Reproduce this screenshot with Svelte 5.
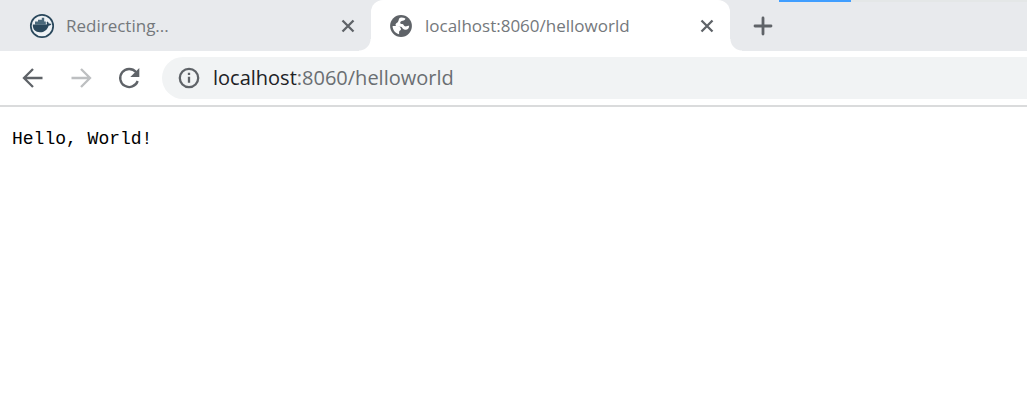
<script>
  let address = $state('localhost:8060/helloworld');
  const split = $derived(address.indexOf(':') < 0 ? address.length : address.indexOf(':'));
</script>

<div class="browser">
  <header>
    <div class="strip">
      <div class="tab">
        <svg class="favicon" viewBox="0 0 26 26" aria-hidden="true">
          <circle cx="13" cy="13" r="11.2" fill="#eef2f5" stroke="#2a485c" stroke-width="1.7" />
          <path fill="#2a485c" d="M3.8 11.6h13.9c.4-.8.2-1.7-.1-2.3l.8-.9c.9.6 1.4 1.4 1.5 2.3.9-.2 1.8 0 2.5.4-.5 1.1-1.5 1.5-2.8 1.6-1.4 4.2-4.2 6.6-8.6 6.6-4.6 0-7.4-2.6-7.2-7.7z" />
          <path fill="#49687a" d="M6 8.6h3v3.2H6zM9 6.8h3v5H9zM12 6.8h.8v-2h2.4v3.8h1.6v3.2H12z" />
        </svg>
        <span>Redirecting...</span>
        <button aria-label="Close Redirecting tab">
          <svg viewBox="0 0 14 14"><path d="M1.5 1.5l11 11m0-11l-11 11" /></svg>
        </button>
      </div>
      <div class="tab active">
        <svg class="favicon" viewBox="0 0 26 26" aria-hidden="true">
          <circle cx="13" cy="13" r="10.9" fill="#5f6368" />
          <path fill="#fff" d="M13.2 4.6c1.6 0 2.9.3 4.2 1-.2 1.5-1.2 2-2.7 2.2-1.5.2-2.5.9-2.5 1.9 0 1.1 1 1.3 2.1 1.3 1.3 0 1.4 1.9 2.6 2.3 1.4.4 2.6-.5 4.3-.5-.1 2.8-1.5 4-3.4 4-1.3 0-1.9-.4-2.8-1-.8-.5-1.1-2-2.2-2H9.9c-1.5 0-2.4-.9-2.4-2.2 0-1.2 1.4-1.5 2.2-2.4.7-.8.8-1.7 1.1-2.7.3-1 1.1-1.9 2.4-1.9z" />
          <path fill="#fff" d="M4.6 13.1h4.5c2.1 0 3.9 1.4 3.9 3.2 0 1.4-1.9 1.2-1.9 2.5v2.4c-3.9-.8-6.5-4.1-6.5-8.1z" />
        </svg>
        <span>localhost:8060/helloworld</span>
        <button aria-label="Close localhost tab">
          <svg viewBox="0 0 14 14"><path d="M1.5 1.5l11 11m0-11l-11 11" /></svg>
        </button>
      </div>
      <button class="new" aria-label="New tab">
        <svg viewBox="0 0 20 20"><path d="M10 2v16M2 10h16" /></svg>
      </button>
      <div class="edge"></div>
    </div>
    <nav>
      <button aria-label="Back">
        <svg viewBox="0 0 24 24"><path d="M21.5 12H3M12 3l-9 9 9 9" /></svg>
      </button>
      <button aria-label="Forward" disabled>
        <svg viewBox="0 0 24 24"><path d="M2.5 12H21M12 3l9 9-9 9" /></svg>
      </button>
      <button aria-label="Reload">
        <svg viewBox="0 0 24 24"><path d="M19 6.1A9 9 0 1 0 20.7 15" /><path class="solid" d="M22.3 2v9h-9z" /></svg>
      </button>
      <div class="omnibox">
        <svg class="info" viewBox="0 0 24 24" aria-hidden="true"><circle cx="12" cy="12" r="9.2" /><path d="M12 10.8v6M12 6.8v2.2" /></svg>
        <div class="address">
          <div class="shown" aria-hidden="true">{address.slice(0, split)}<span>{address.slice(split)}</span></div>
          <input aria-label="Address" type="text" spellcheck="false" bind:value={address} />
        </div>
      </div>
    </nav>
  </header>
  <main><pre>Hello, World!</pre></main>
</div>

<style>
  :global(body) {
    margin: 0;
    background: #fff;
  }
  .browser {
    font-family: 'Open Sans', 'Noto Sans', sans-serif;
    color: #5f6368;
  }
  button {
    display: flex;
    align-items: center;
    justify-content: center;
    flex: none;
    padding: 0;
    border: 0;
    background: none;
    color: inherit;
  }
  svg {
    flex: none;
    fill: none;
    stroke: currentColor;
    stroke-width: 2.3;
  }
  .strip {
    position: relative;
    display: flex;
    height: 51px;
    padding-left: 12px;
    background: #e8eaed;
  }
  .tab {
    position: relative;
    display: flex;
    flex: 0 1 359px;
    box-sizing: border-box;
    min-width: 0;
    align-items: center;
    gap: 11px;
    padding: 0 13px 0 17px;
    font-size: 17px;
    line-height: 24px;
    color: #74787c;
  }
  .tab span {
    flex: 1;
    min-width: 0;
    overflow: hidden;
    white-space: nowrap;
  }
  .tab button {
    width: 20px;
    height: 20px;
    color: #5f6368;
  }
  .tab button svg {
    width: 14px;
    height: 14px;
  }
  .active {
    border-radius: 12px 12px 0 0;
    background: #fff;
  }
  .active::before,
  .active::after {
    position: absolute;
    bottom: 0;
    width: 12px;
    height: 12px;
    content: '';
  }
  .active::before {
    right: 100%;
    background: radial-gradient(circle at 0 0, transparent 11px, #fff 12px);
  }
  .active::after {
    left: 100%;
    background: radial-gradient(circle at 100% 0, transparent 11px, #fff 12px);
  }
  .favicon {
    width: 26px;
    height: 26px;
    stroke: none;
  }
  .new {
    width: 42px;
    margin-left: 12px;
  }
  .new svg {
    width: 20px;
    height: 20px;
    stroke-width: 2.8;
    stroke-linecap: round;
  }
  .edge {
    position: absolute;
    top: 0;
    right: 0;
    left: 779px;
    height: 2px;
    background: linear-gradient(90deg, #409eff 72px, #e4e7e7 72px);
  }
  nav {
    display: flex;
    align-items: center;
    gap: 24px;
    padding: 6px 0 6px 21px;
    border-bottom: 2px solid #dadbdc;
  }
  nav button {
    width: 24px;
    height: 24px;
  }
  nav button:disabled {
    color: #bdbfc1;
  }
  nav button svg {
    width: 24px;
    height: 24px;
  }
  .solid {
    fill: currentColor;
    stroke: none;
  }
  .omnibox {
    display: flex;
    flex: 1;
    min-width: 0;
    height: 42px;
    align-items: center;
    gap: 12px;
    margin-left: -3px;
    padding-left: 15px;
    border-radius: 21px 0 0 21px;
    background: #f1f3f4;
    font-size: 20px;
    line-height: 28px;
  }
  .info {
    width: 24px;
    height: 24px;
  }
  .address {
    display: grid;
    flex: 1;
    min-width: 0;
  }
  .shown,
  .address input {
    grid-area: 1 / 1;
    min-width: 0;
    height: 28px;
    white-space: pre;
  }
  .shown {
    overflow: hidden;
    color: #202124;
  }
  .shown span {
    color: #6a6e72;
  }
  .address input {
    padding: 0;
    border: 0;
    outline: 0;
    background: transparent;
    color: transparent;
    caret-color: #202124;
    font: inherit;
  }
  main {
    padding: 20px 12px;
  }
  pre {
    margin: 0;
    color: #000;
    font: 18px/24px 'Liberation Mono', monospace;
  }
</style>
